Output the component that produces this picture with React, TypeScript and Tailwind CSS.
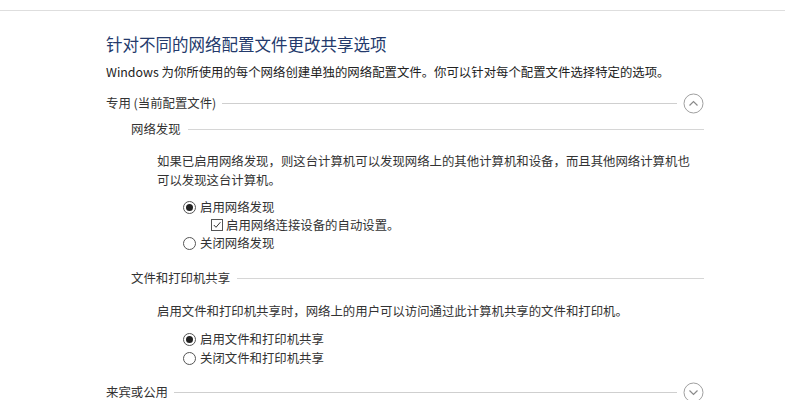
import React from "react";

const font = { fontFamily: '"Noto Sans CJK SC", "Noto Sans", sans-serif' };

function Chevron({ up }: { up: boolean }) {
  return (
    <svg width="21" height="21" viewBox="0 0 21 21" className="shrink-0">
      <circle cx="10.5" cy="10.5" r="9.5" fill="none" stroke="#a0a0a0" strokeWidth="1" />
      {up ? (
        <path d="M6.5 12.5 L10.5 8.5 L14.5 12.5" fill="none" stroke="#8a8a8a" strokeWidth="1.2" />
      ) : (
        <path d="M6.5 8.5 L10.5 12.5 L14.5 8.5" fill="none" stroke="#8a8a8a" strokeWidth="1.2" />
      )}
    </svg>
  );
}

function Radio({ checked }: { checked: boolean }) {
  return (
    <span className="w-[13px] h-[13px] rounded-full border border-[#555] flex items-center justify-center shrink-0 bg-white">
      {checked && <span className="w-[7px] h-[7px] rounded-full bg-[#222]" />}
    </span>
  );
}

function Check() {
  return (
    <span className="w-[12px] h-[12px] border border-[#555] flex items-center justify-center shrink-0 bg-white">
      <svg width="10" height="10" viewBox="0 0 10 10">
        <path d="M1.8 5 L4 7.3 L8.4 2.2" fill="none" stroke="#333" strokeWidth="1" />
      </svg>
    </span>
  );
}

export default function App() {
  return (
    <div className="w-[785px] h-[400px] bg-white overflow-hidden text-[#333]" style={font}>
      <div className="h-[10px]" />
      <div className="h-px bg-[#dedede]" />
      <div className="pl-[106px] w-[704px]">
        <div className="mt-[21px] h-[24px] leading-[24px] text-[16.5px] text-[#243a6c]">
          针对不同的网络配置文件更改共享选项
        </div>
        <div className="mt-[6px] h-[20px] leading-[20px] text-[12.4px] text-[#222] whitespace-nowrap">
          Windows 为你所使用的每个网络创建单独的网络配置文件。你可以针对每个配置文件选择特定的选项。
        </div>

        <div className="mt-[11px] h-[20px] flex items-center text-[12.4px]">
          <span className="leading-[20px] whitespace-nowrap">专用 (当前配置文件)</span>
          <div className="flex-1 h-px bg-[#cfcfcf] ml-[6px] mr-[6px]" />
          <Chevron up={true} />
        </div>

        <div className="pl-[25px]">
          <div className="mt-[6px] h-[20px] flex items-center text-[12.4px]">
            <span className="leading-[20px] whitespace-nowrap">网络发现</span>
            <div className="flex-1 h-px bg-[#d6d6d6] ml-[7px]" />
          </div>
          <div className="pl-[26px] mt-[13px] text-[12.4px] leading-[19px] whitespace-nowrap">
            如果已启用网络发现，则这台计算机可以发现网络上的其他计算机和设备，而且其他网络计算机也
            <br />
            可以发现这台计算机。
          </div>
          <div className="pl-[52px] mt-[8px] text-[12.4px] leading-[18px]">
            <div className="flex items-center gap-[4px] h-[18px]">
              <Radio checked={true} />
              <span>启用网络发现</span>
            </div>
            <div className="flex items-center gap-[3px] h-[18px] pl-[28px]">
              <Check />
              <span>启用网络连接设备的自动设置。</span>
            </div>
            <div className="flex items-center gap-[4px] h-[18px]">
              <Radio checked={false} />
              <span>关闭网络发现</span>
            </div>
          </div>

          <div className="mt-[16px] h-[20px] flex items-center text-[12.4px]">
            <span className="leading-[20px] whitespace-nowrap">文件和打印机共享</span>
            <div className="flex-1 h-px bg-[#d6d6d6] ml-[7px]" />
          </div>
          <div className="pl-[26px] mt-[13px] h-[20px] text-[12.4px] leading-[20px] whitespace-nowrap">
            启用文件和打印机共享时，网络上的用户可以访问通过此计算机共享的文件和打印机。
          </div>
          <div className="pl-[52px] mt-[9px] text-[12.4px] leading-[19px]">
            <div className="flex items-center gap-[4px] h-[19px]">
              <Radio checked={true} />
              <span>启用文件和打印机共享</span>
            </div>
            <div className="flex items-center gap-[4px] h-[19px]">
              <Radio checked={false} />
              <span>关闭文件和打印机共享</span>
            </div>
          </div>
        </div>

        <div className="mt-[14px] h-[20px] flex items-center text-[12.4px]">
          <span className="leading-[20px] whitespace-nowrap">来宾或公用</span>
          <div className="flex-1 h-px bg-[#cfcfcf] ml-[6px] mr-[6px]" />
          <Chevron up={false} />
        </div>
      </div>
    </div>
  );
}
